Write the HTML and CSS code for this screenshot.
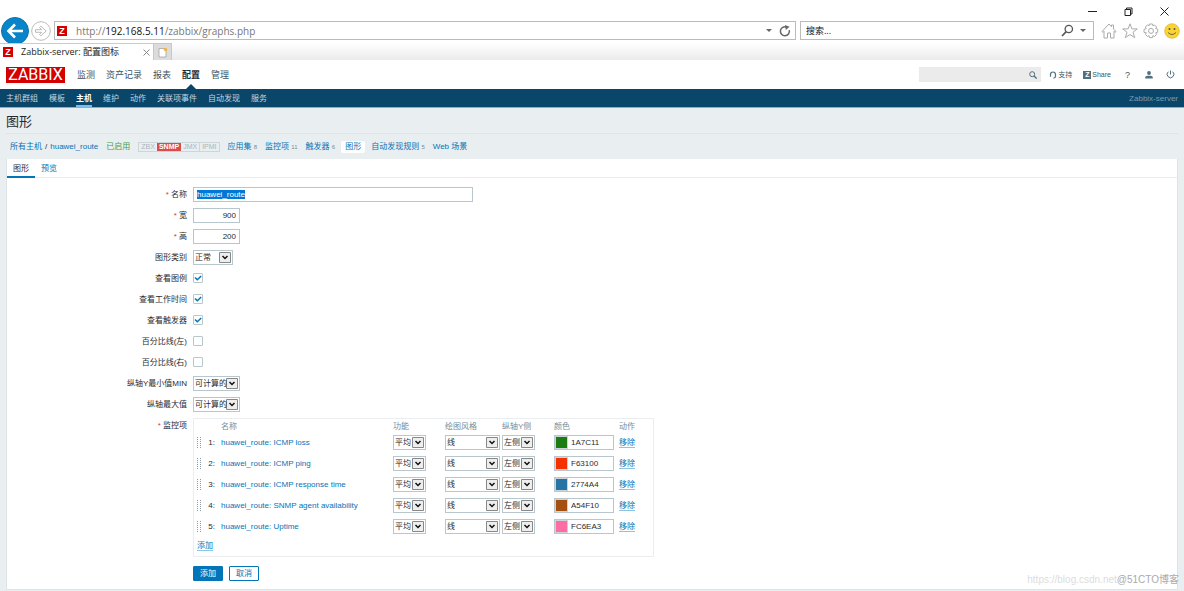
FILE: index.html
```html
<!DOCTYPE html>
<html lang="zh-CN">
<head>
<meta charset="utf-8">
<title>Zabbix-server: 配置图标</title>
<link rel="stylesheet" href="styles.css">
</head>
<body>
<header class="browser">
  <div class="window-controls">
    <button aria-label="最小化"><svg width="9" height="9" viewBox="0 0 9 9"><path d="M0 4.5h9" stroke="#222"/></svg></button>
    <button aria-label="还原"><svg width="9" height="9" viewBox="0 0 9 9"><path d="M1 2.5h5.500v6H1zM2.500 2.500V1H8v6H6.500" fill="none" stroke="#222"/></svg></button>
    <button aria-label="关闭"><svg width="9" height="9" viewBox="0 0 9 9"><path d="M.5.5l8 8M8.500.5l-8 8" stroke="#222"/></svg></button>
  </div>
  <div class="address-row">
    <button class="back" aria-label="后退"><svg width="28" height="28" viewBox="0 0 28 28"><circle cx="14" cy="14" r="13.500" fill="#0a84c8" stroke="#0872ad"/><path d="M22 14H8M14 7.500L7.500 14l6.500 6.500" fill="none" stroke="#fff" stroke-width="2.600"/></svg></button>
    <button class="forward" aria-label="前进"><svg width="20" height="20" viewBox="0 0 20 20"><circle cx="10" cy="10" r="9.300" fill="#fff" stroke="#bbb"/><path d="M4.500 8.700h6L8.500 6.500l1.300-1.300L15.200 10l-5.400 4.800-1.300-1.300 2-2.200h-6z" fill="#fff" stroke="#aaa" stroke-width=".8"/></svg></button>
    <div class="address">
      <span class="favicon">Z</span>
      <span class="url">http://<b>192.168.5.11</b>/zabbix/graphs.php</span>
      <i class="caret"></i>
      <button aria-label="刷新"><svg width="12" height="12" viewBox="0 0 12 12"><path d="M10.300 5.200A4.500 4.500 0 1 1 7.500 2" fill="none" stroke="#666" stroke-width="1.500"/><path d="M6 0l4.500 1.800L6.800 5z" fill="#666"/></svg></button>
    </div>
    <div class="web-search">
      <input class="web-search-input" aria-label="搜索" placeholder="搜索...">
      <button aria-label="搜索"><svg width="13" height="13" viewBox="0 0 13 13"><circle cx="7.800" cy="5" r="3.700" fill="none" stroke="#555" stroke-width="1.300"/><path d="M5.200 7.700L1 12" stroke="#555" stroke-width="1.700"/></svg></button>
      <i class="caret"></i>
    </div>
    <div class="tools">
      <button aria-label="主页"><svg width="16" height="16" viewBox="0 0 16 16"><path d="M1 8.500L8 1l2.500 2.700V2h2v3.900L15 8.500l-1 .8-1-1V15H9.500v-5h-3v5H3V8.300l-1 1z" fill="#fff" stroke="#aaa"/></svg></button>
      <button aria-label="收藏"><svg width="16" height="16" viewBox="0 0 16 16"><path d="M8 .8l1.900 5.100h5.400L11 9.200l1.700 5.500L8 11.500l-4.700 3.200L5 9.200.7 5.900h5.400z" fill="#fff" stroke="#aaa"/></svg></button>
      <button aria-label="工具"><svg width="16" height="16" viewBox="0 0 16 16"><path d="M6.500 1h3l.4 1.800 1.600-.9 2.100 2.100-.9 1.600 2 .6v3l-2 .6.900 1.600-2.100 2.100-1.600-.9-.4 2h-3l-.5-2-1.500.9-2.100-2.100.9-1.600L1 9.400v-3l2.200-.7L2.400 4l2.100-2.100 1.600.9z" fill="#fff" stroke="#aaa"/><circle cx="8" cy="7.900" r="2.500" fill="none" stroke="#aaa"/></svg></button>
      <button aria-label="反馈"><svg width="16" height="16" viewBox="0 0 16 16"><circle cx="8" cy="8" r="7.300" fill="#fbd431" stroke="#d5b32c" stroke-width=".7"/><circle cx="5.500" cy="6" r="1" fill="#555"/><circle cx="10.500" cy="6" r="1" fill="#555"/><path d="M4 9.500q4 4 8 0" fill="none" stroke="#665" /></svg></button>
    </div>
  </div>
  <div class="tab-strip">
    <div class="browser-tab"><span class="favicon">Z</span><span class="tab-title">Zabbix-server: 配置图标</span><button aria-label="关闭标签页"><svg width="7" height="7" viewBox="0 0 7 7"><path d="M.5.5l6 6M6.500.5l-6 6" stroke="#888"/></svg></button></div>
    <button class="new-tab" aria-label="新建标签页"><svg width="10" height="11" viewBox="0 0 10 11"><path d="M1 1.500h5.500L8 4v6H1z" fill="#fff" stroke="#999" stroke-width=".7"/><circle cx="7.500" cy="2.500" r="1.800" fill="#f0b44c"/></svg></button>
  </div>
</header>

<div class="top-bar">
  <a class="logo" href="#">ZABBIX</a>
  <nav class="main-nav"><a href="#">监测</a><a href="#">资产记录</a><a href="#">报表</a><a class="current" href="#">配置</a><a href="#">管理</a></nav>
  <div class="top-search"><input aria-label="全局搜索"><button aria-label="查找"><svg width="8" height="8" viewBox="0 0 8 8"><circle cx="3.200" cy="3.200" r="2.500" fill="none" stroke="#50707e"/><path d="M5 5l2.600 2.600" stroke="#50707e" stroke-width="1.300"/></svg></button></div>
  <nav class="user-nav">
    <a class="support" href="#"><svg width="8" height="8" viewBox="0 0 8 8"><path d="M1.500 5V3.500a2.500 2.500 0 0 1 5 0V5q0 2-2 2.200M1.500 3.500v2.300M6.500 3.500v2.300" fill="none" stroke="#50707e" stroke-width="1.200"/></svg>支持</a>
    <a class="share" href="#"><span class="share-mark">Z</span>Share</a>
    <a class="help" href="#">?</a>
    <a class="user" href="#" aria-label="用户"><svg width="8" height="8" viewBox="0 0 8 8"><circle cx="4" cy="2" r="1.900" fill="#50707e"/><path d="M.3 7.500V6.300Q.3 4.800 2.500 4.800h3q2.200 0 2.200 1.500v1.200z" fill="#50707e"/></svg></a>
    <a href="#" aria-label="退出"><svg width="9" height="9" viewBox="0 0 9 9"><path d="M4.500.5v4M2.300 1.700a3.400 3.400 0 1 0 4.400 0" fill="none" stroke="#50707e"/></svg></a>
  </nav>
</div>
<nav class="sub-nav">
  <a href="#">主机群组</a><a href="#">模板</a><a class="current" href="#">主机</a><a href="#">维护</a><a href="#">动作</a><a href="#">关联项事件</a><a href="#">自动发现</a><a href="#">服务</a>
  <span class="server">Zabbix-server</span>
</nav>

<main>
  <h1>图形</h1>
  <nav class="crumbs">
    <span class="path"><a href="#">所有主机</a><span>/</span><a href="#">huawei_route</a></span>
    <span class="enabled">已启用</span>
    <span class="interfaces"><span>ZBX</span><span class="failing">SNMP</span><span>JMX</span><span>IPMI</span></span>
    <span><a href="#">应用集</a> <sup>8</sup></span>
    <span><a href="#">监控项</a> <sup>11</sup></span>
    <span><a href="#">触发器</a> <sup>6</sup></span>
    <a class="selected" href="#">图形</a>
    <span><a href="#">自动发现规则</a> <sup>5</sup></span>
    <a href="#">Web 场景</a>
  </nav>

  <section class="panel">
    <nav class="tabs"><a class="current" href="#">图形</a><a href="#">预览</a></nav>
    <form class="form">
      <label class="required" for="name">名称</label><input class="text" id="name" value="huawei_route">
      <label class="required" for="width">宽</label><input class="text number" id="width" value="900">
      <label class="required" for="height">高</label><input class="text number" id="height" value="200">
      <label for="type">图形类别</label><select class="type" id="type"><option>正常</option></select>
      <label for="legend">查看图例</label><input type="checkbox" id="legend" checked>
      <label for="worktime">查看工作时间</label><input type="checkbox" id="worktime" checked>
      <label for="triggers">查看触发器</label><input type="checkbox" id="triggers" checked>
      <label for="left">百分比线(左)</label><input type="checkbox" id="left">
      <label for="right">百分比线(右)</label><input type="checkbox" id="right">
      <label for="ymin">纵轴Y最小值MIN</label><select class="axis" id="ymin"><option>可计算的</option></select>
      <label for="ymax">纵轴最大值</label><select class="axis" id="ymax"><option>可计算的</option></select>
      <span class="label required">监控项</span>
      <div class="items">
        <table>
          <colgroup><col class="c-drag"><col class="c-num"><col class="c-name"><col class="c-func"><col class="c-draw"><col class="c-side"><col class="c-color"><col class="c-action"></colgroup>
          <thead><tr><th></th><th></th><th>名称</th><th>功能</th><th>绘图风格</th><th>纵轴Y侧</th><th>颜色</th><th>动作</th></tr></thead>
          <tbody>
            <tr><td><i class="drag"></i></td><td>1:</td><td><a href="#">huawei_route: ICMP loss</a></td><td><select class="short" aria-label="功能"><option>平均</option></select></td><td><select class="draw" aria-label="绘图风格"><option>线</option></select></td><td><select class="short" aria-label="纵轴Y侧"><option>左侧</option></select></td><td><span class="color"><i class="swatch green"></i><input aria-label="颜色" value="1A7C11"></span></td><td><a class="action" href="#">移除</a></td></tr>
            <tr><td><i class="drag"></i></td><td>2:</td><td><a href="#">huawei_route: ICMP ping</a></td><td><select class="short" aria-label="功能"><option>平均</option></select></td><td><select class="draw" aria-label="绘图风格"><option>线</option></select></td><td><select class="short" aria-label="纵轴Y侧"><option>左侧</option></select></td><td><span class="color"><i class="swatch red"></i><input aria-label="颜色" value="F63100"></span></td><td><a class="action" href="#">移除</a></td></tr>
            <tr><td><i class="drag"></i></td><td>3:</td><td><a href="#">huawei_route: ICMP response time</a></td><td><select class="short" aria-label="功能"><option>平均</option></select></td><td><select class="draw" aria-label="绘图风格"><option>线</option></select></td><td><select class="short" aria-label="纵轴Y侧"><option>左侧</option></select></td><td><span class="color"><i class="swatch blue"></i><input aria-label="颜色" value="2774A4"></span></td><td><a class="action" href="#">移除</a></td></tr>
            <tr><td><i class="drag"></i></td><td>4:</td><td><a href="#">huawei_route: SNMP agent availability</a></td><td><select class="short" aria-label="功能"><option>平均</option></select></td><td><select class="draw" aria-label="绘图风格"><option>线</option></select></td><td><select class="short" aria-label="纵轴Y侧"><option>左侧</option></select></td><td><span class="color"><i class="swatch brown"></i><input aria-label="颜色" value="A54F10"></span></td><td><a class="action" href="#">移除</a></td></tr>
            <tr><td><i class="drag"></i></td><td>5:</td><td><a href="#">huawei_route: Uptime</a></td><td><select class="short" aria-label="功能"><option>平均</option></select></td><td><select class="draw" aria-label="绘图风格"><option>线</option></select></td><td><select class="short" aria-label="纵轴Y侧"><option>左侧</option></select></td><td><span class="color"><i class="swatch pink"></i><input aria-label="颜色" value="FC6EA3"></span></td><td><a class="action" href="#">移除</a></td></tr>
          </tbody>
        </table>
        <div class="add-row"><a class="action" href="#">添加</a></div>
      </div>
      <div class="buttons"><button class="primary" type="button">添加</button><button class="secondary" type="button">取消</button></div>
    </form>
  </section>
</main>
<div class="watermark"><span class="blog">https://blog.csdn.net</span><span class="host">@51CTO博客</span></div>
<script src="page.js"></script>
</body>
</html>
```
FILE: page.js
```js
const nameField = document.getElementById("name");
nameField.focus({ preventScroll: true });
nameField.select();
```
FILE: styles.css
```css
* { box-sizing: border-box; }
body {
  margin: 0;
  min-height: 100vh;
  background: #e9eef1;
  color: #1f2c33;
  font: 8px/12px "Liberation Sans", "Noto Sans CJK SC", sans-serif;
}
a { color: #0275b8; text-decoration: none; }
button { margin: 0; padding: 0; border: 0; background: none; font: inherit; color: inherit; }
input, select { margin: 0; font: inherit; color: inherit; outline: 0; border-radius: 0; }
svg { display: block; }

/* Browser window */
.browser { background: #fff; font-family: "Open Sans", "Noto Sans CJK SC", sans-serif; }
.window-controls { display: flex; justify-content: flex-end; gap: 27px; height: 17px; padding: 6px 15px 0 0; }
.address-row { display: flex; align-items: center; height: 26px; padding: 1px 4px 0 1px; }
.back { align-self: flex-start; height: 26px; margin-top: -1px; overflow: hidden; }
.forward { margin: 0 3px 0 2px; }
.address, .web-search { display: flex; align-items: center; height: 19px; border: 1px solid #bbb; }
.address { flex: 1; margin-right: 4px; padding: 0 4px 0 2px; }
.favicon { width: 10px; height: 10px; background: #d40000; color: #fff; font: bold 9px/10px "Liberation Sans", sans-serif; text-align: center; }
.url { flex: 1; margin-left: 9px; color: #777; font-size: 10px; }
.url b { color: #111; font-weight: normal; }
.caret { margin: 0 7px; border: 3px solid transparent; border-top-color: #666; border-bottom: 0; }
.web-search { width: 294px; padding: 0 1px 0 5px; }
.web-search-input { flex: 1; min-width: 0; padding: 0; border: 0; font-size: 9px; }
.web-search-input::placeholder { color: #111; }
.web-search .caret { margin: 0 6px; }
.tools { display: flex; gap: 5px; margin-left: 7px; }
.tab-strip { display: flex; height: 17px; background: linear-gradient(#fff, #ebebeb); }
.browser-tab { display: flex; align-items: center; width: 153px; padding: 0 3px; background: #fff; border-top: 1px solid #ccc; }
.tab-title { flex: 1; margin-left: 8px; font-size: 9px; color: #222; }
.new-tab { display: grid; place-items: center; width: 19px; background: #dcdcdc; border: 1px solid #c8c8c8; border-bottom: 0; }

/* Zabbix header */
.top-bar { display: flex; align-items: center; height: 29px; padding: 0 9px 0 6px; background: #fff; }
.logo { width: 59px; height: 16px; background: #d40000; color: #fff; font: 16px/16px Roboto, sans-serif; text-align: center; }
.main-nav { display: flex; gap: 11px; flex: 1; align-self: stretch; margin-left: 12px; font-size: 9px; line-height: 30px; }
.main-nav a { position: relative; color: #3c5563; }
.main-nav .current { font-weight: bold; color: #1f2c33; }
.main-nav .current::after { content: ""; position: absolute; left: 4px; bottom: 0; border: 5px solid transparent; border-bottom-color: #0a466a; border-top: 0; }
.top-search { display: flex; align-items: center; width: 122px; height: 15px; padding-right: 4px; background: #ebebeb; }
.top-search input { flex: 1; min-width: 0; border: 0; background: none; }
.user-nav { display: flex; align-items: center; margin-left: 8px; font-size: 7px; }
.user-nav a { display: flex; align-items: center; gap: 1px; color: #3c5563; }
.support { margin-right: 11px; }
.share { margin-right: 14px; }
.share-mark { width: 8px; height: 8px; background: #50707e; color: #fff; font: bold 7px/8px "Liberation Sans", sans-serif; text-align: center; }
.user-nav .help { margin-right: 15px; font-size: 9px; }
.user { margin-right: 13px; }
.sub-nav { display: flex; gap: 11px; height: 19px; padding: 0 6px; background: #0a466a; border-bottom: 1px solid #8fafc0; line-height: 19px; }
.sub-nav a { color: #c4d5df; }
.sub-nav .current { height: 18px; color: #fff; font-weight: bold; border-bottom: 2px solid #78bdf0; }
.server { margin-left: auto; color: #7d9bad; }

/* Page heading */
h1 { margin: 0 6px; height: 26px; border-bottom: 1px solid #dfe4e7; font-size: 13px; line-height: 27px; font-weight: normal; }
.crumbs { display: flex; align-items: center; gap: 8px; height: 25px; padding: 1px 10px 0; white-space: nowrap; }
.path { display: flex; gap: 3px; }
.enabled { color: #429e47; }
.interfaces { display: flex; height: 10px; border: 1px solid #ccd5d9; color: #aab6bc; font-size: 7px; line-height: 8px; }
.interfaces span { padding: 0 2px; }
.interfaces span:last-child { border-left: 1px solid #ccd5d9; }
.interfaces .failing { background: #d64e4e; color: #fff; font-weight: bold; }
.crumbs sup { color: #768d99; font-size: 6px; line-height: 8px; vertical-align: baseline; }
.crumbs .selected { margin: 0 -2px; padding: 0 4px; background: #fff; border-radius: 2px; }

/* Form panel */
.panel { margin: 0 6px; background: #fff; border: 1px solid #dfe4e7; border-top: 0; }
.tabs { display: flex; height: 19px; border-bottom: 1px solid #ebeef0; line-height: 19px; }
.tabs a { padding: 0 6px; }
.tabs .current { height: 19px; color: #1f2c33; border-bottom: 2px solid #0275b8; }
.form { display: grid; grid-template-columns: 180px 1fr; column-gap: 6px; row-gap: 6px; align-items: start; justify-items: start; padding: 9px 0 8px; }
.form label, .label { justify-self: end; line-height: 15px; white-space: nowrap; }
.required::before { content: "* "; color: #e33734; }
.text { width: 280px; height: 15px; padding: 0 3px; border: 1px solid #b8c6cd; background: #fff; }
.text::selection { background: #0078d7; color: #fff; }
.number { width: 47px; text-align: right; }
input[type="checkbox"] { appearance: none; width: 10px; height: 10px; margin: 2px 0 3px; border: 1px solid #b8c6cd; border-radius: 1px; background: #fff; }
input[type="checkbox"]:checked { background: url("data:image/svg+xml,%3Csvg xmlns='http://www.w3.org/2000/svg' viewBox='0 0 8 8'%3E%3Cpath d='M1 3.500l2.300 2.300L7.200 2' fill='none' stroke='%230275b8' stroke-width='1.500'/%3E%3C/svg%3E") center / 8px 8px no-repeat; }
select {
  appearance: none;
  display: block;
  height: 15px;
  padding: 0 0 0 1px;
  border: 1px solid #b8c6cd;
  background: #fff url("data:image/svg+xml,%3Csvg xmlns='http://www.w3.org/2000/svg' viewBox='0 0 12 11'%3E%3Cpath d='M.5.5h11v10H.5z' fill='%23eee' stroke='%23888'/%3E%3Cpath d='M3.500 4L6 6.500 8.500 4' fill='none' stroke='%23111' stroke-width='1.500'/%3E%3C/svg%3E") right 1px center / 12px 11px no-repeat;
}
.type { width: 40px; }
.axis { width: 47px; }
.short { width: 33px; }
.draw { width: 55px; }
.items { width: 461px; border: 1px solid #ebeef0; }
table { width: 100%; table-layout: fixed; border-collapse: collapse; }
.c-drag { width: 11px; }
.c-num { width: 16px; }
.c-name { width: 172px; }
.c-func, .c-side { width: 52px; }
.c-draw { width: 57px; }
.c-color { width: 65px; }
.c-action { width: 34px; }
th, td { padding: 0; text-align: left; white-space: nowrap; }
th { height: 13px; padding-top: 2px; color: #768d99; font-weight: normal; line-height: 11px; }
td { height: 21px; }
td:nth-child(2) { padding-right: 6px; text-align: right; }
.drag {
  display: block;
  width: 4px;
  height: 11px;
  margin-left: 3px;
  background:
    repeating-linear-gradient(transparent 0 1px, #fff 1px 2px),
    repeating-linear-gradient(90deg, #8a9aa3 0 1px, #fff 1px 3px);
}
.color { display: flex; width: 60px; height: 15px; border: 1px solid #b8c6cd; }
.swatch { width: 13px; border: 1px solid #ccd5d9; }
.color input { flex: 1; min-width: 0; padding: 0 3px; border: 0; background: #fff; }
.green { background: #1a7c11; }
.red { background: #f63100; }
.blue { background: #2774a4; }
.brown { background: #a54f10; }
.pink { background: #fc6ea3; }
.action { border-bottom: 1px solid #8fc3e2; }
.add-row { height: 19px; padding: 3px 3px 0; }
.buttons { grid-column: 2; display: flex; gap: 6px; margin-top: 3px; }
.buttons button { width: 30px; height: 15px; border: 1px solid #0275b8; border-radius: 1px; line-height: 13px; color: #0275b8; }
.buttons .primary { background: #0275b8; color: #fff; }

/* Watermark lies over the panel corner */
.watermark { position: absolute; right: 5px; bottom: 4px; display: flex; font-size: 10px; line-height: 14px; }
.blog { color: #ddd; }
.host { color: #aaa; }
```
